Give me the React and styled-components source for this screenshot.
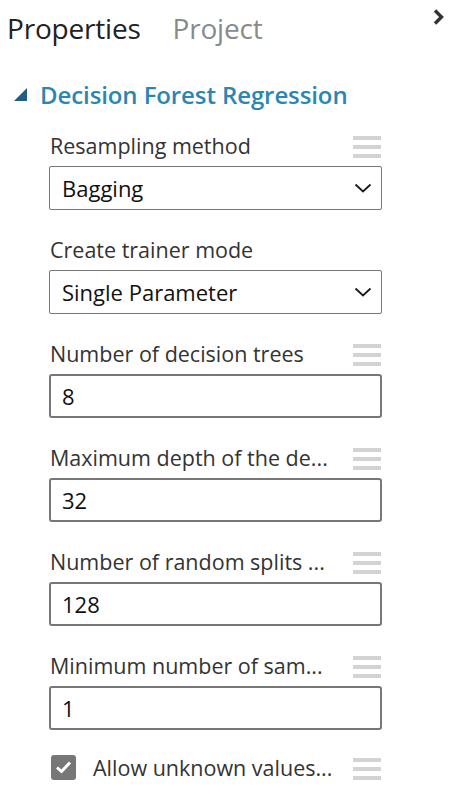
import React from 'react';
import styled, { createGlobalStyle } from 'styled-components';

const GlobalStyle = createGlobalStyle`
  body {
    margin: 0;
    background: #ffffff;
    font-family: 'Open Sans', 'Noto Sans', sans-serif;
  }
`;

const Panel = styled.div`
  width: 450px;
  height: 797px;
  overflow: hidden;
  background: #ffffff;
`;

const TabBar = styled.div`
  display: flex;
  align-items: center;
  height: 56px;
  padding-left: 7px;
  gap: 32px;
`;

const Tab = styled.div`
  font-size: 28px;
  color: ${(p) => (p.active ? '#222222' : '#8a8a8a')};
  letter-spacing: -0.2px;
`;

const Collapse = styled.div`
  margin-left: auto;
  margin-right: 6px;
  align-self: flex-start;
  margin-top: 9px;
  display: flex;
`;

const SectionHeader = styled.div`
  display: flex;
  align-items: center;
  height: 32px;
  margin-top: 22px;
  padding-left: 14px;
  gap: 13px;
`;

const SectionTitle = styled.div`
  font-size: 24px;
  font-weight: 600;
  color: #2a86b4;
  letter-spacing: -0.1px;
`;

const Fields = styled.div`
  margin-top: 20px;
  margin-left: 49px;
  width: 333px;
`;

const Field = styled.div`
  margin-bottom: 24px;
`;

const LabelRow = styled.div`
  display: flex;
  align-items: center;
  justify-content: space-between;
  height: 30px;
  margin-bottom: 6px;
`;

const Label = styled.div`
  font-size: 21.5px;
  color: #333333;
  margin-left: 1px;
  white-space: nowrap;
`;

const Handle = styled.div`
  display: flex;
  flex-direction: column;
  gap: 5px;
  width: 28px;
  margin-right: 1px;
  margin-top: 4px;
`;

const HandleBar = styled.div`
  height: 4px;
  background: #d3d3d3;
`;

const SelectBox = styled.div`
  display: flex;
  align-items: center;
  justify-content: space-between;
  height: 44px;
  box-sizing: border-box;
  border: 1px solid #777777;
  border-radius: 2px;
  padding: 0 9px 0 12px;
  font-size: 22px;
  color: #111111;
`;

const InputBox = styled.div`
  display: flex;
  align-items: center;
  height: 44px;
  box-sizing: border-box;
  border: 2px solid #777777;
  border-radius: 3px;
  padding-left: 11px;
  font-size: 22px;
  color: #111111;
`;

const CheckRow = styled.div`
  display: flex;
  align-items: center;
  height: 26px;
`;

const CheckBox = styled.div`
  width: 25px;
  height: 25px;
  margin-left: 2px;
  border-radius: 3px;
  background: #777777;
  display: flex;
  align-items: center;
  justify-content: center;
`;

const CheckLabel = styled(Label)`
  margin-left: 17px;
  flex: 1;
`;

const DragHandle = () => (
  <Handle>
    <HandleBar />
    <HandleBar />
    <HandleBar />
  </Handle>
);

const Chevron = () => (
  <svg width="18" height="10" viewBox="0 0 18 10">
    <path d="M1.5 1.5 L9 8.5 L16.5 1.5" fill="none" stroke="#1a1a1a" strokeWidth="1.8" />
  </svg>
);

const selects = [
  { label: 'Resampling method', value: 'Bagging' },
  { label: 'Create trainer mode', value: 'Single Parameter' },
];

const inputs = [
  { label: 'Number of decision trees', value: '8' },
  { label: 'Maximum depth of the de...', value: '32' },
  { label: 'Number of random splits ...', value: '128' },
  { label: 'Minimum number of sam...', value: '1' },
];

const App = () => {
  return (
    <Panel>
      <GlobalStyle />
      <TabBar>
        <Tab active>Properties</Tab>
        <Tab>Project</Tab>
        <Collapse>
          <svg width="11" height="16" viewBox="0 0 11 16">
            <path d="M2 1.5 L8.5 8 L2 14.5" fill="none" stroke="#333333" strokeWidth="3.4" />
          </svg>
        </Collapse>
      </TabBar>
      <SectionHeader>
        <svg width="13" height="13" viewBox="0 0 13 13">
          <path d="M13 0 L13 13 L0 13 Z" fill="#1f5f80" />
        </svg>
        <SectionTitle>Decision Forest Regression</SectionTitle>
      </SectionHeader>
      <Fields>
        {selects.map((s) => (
          <Field key={s.label}>
            <LabelRow>
              <Label>{s.label}</Label>
              {s.label === 'Resampling method' && <DragHandle />}
            </LabelRow>
            <SelectBox>
              <span>{s.value}</span>
              <Chevron />
            </SelectBox>
          </Field>
        ))}
        {inputs.map((f) => (
          <Field key={f.label}>
            <LabelRow>
              <Label>{f.label}</Label>
              <DragHandle />
            </LabelRow>
            <InputBox>{f.value}</InputBox>
          </Field>
        ))}
        <CheckRow>
          <CheckBox>
            <svg width="17" height="14" viewBox="0 0 17 14">
              <path d="M2 7.5 L6.5 11.5 L15 2.5" fill="none" stroke="#ffffff" strokeWidth="3" />
            </svg>
          </CheckBox>
          <CheckLabel>Allow unknown values...</CheckLabel>
          <DragHandle />
        </CheckRow>
      </Fields>
    </Panel>
  );
};

export default App;
